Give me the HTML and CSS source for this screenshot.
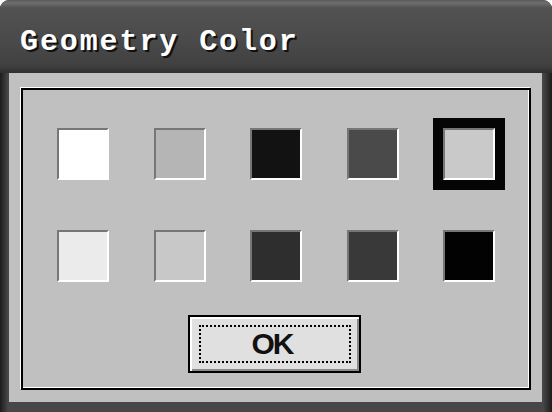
FILE: index.html
```html
<!DOCTYPE html>
<html lang="en">
<head>
  <meta charset="UTF-8">
  <title>Geometry Color</title>
  <link rel="stylesheet" href="styles.css">
</head>
<body>
  <div class="window">
    <div class="titlebar">Geometry Color</div>
    <div class="client">
      <div class="panel">
        <div class="swatches">
          <div class="swatch c1"></div>
          <div class="swatch c2"></div>
          <div class="swatch c3"></div>
          <div class="swatch c4"></div>
          <div class="swatch c5 selected"></div>
          <div class="swatch c6"></div>
          <div class="swatch c7"></div>
          <div class="swatch c8"></div>
          <div class="swatch c9"></div>
          <div class="swatch c10"></div>
        </div>
        <button class="ok"><span>OK</span></button>
      </div>
    </div>
  </div>
</body>
</html>
```

FILE: styles.css
```css
*{margin: 0; padding: 0; box-sizing: border-box;}
body{background: #fff; width: 552px; height: 412px; overflow: hidden;}
div.window{width: 552px; height: 412px; border-radius: 9px 9px 0 0; overflow: hidden; display: flex; flex-direction: column;
  background: linear-gradient(to right, #1c1c1c 0, #474747 8px, #474747 calc(100% - 9px), #1c1c1c 100%);}
div.titlebar{height: 73px; flex: none; padding: 28px 0 0 20px; color: #fff;
  font-family: "Liberation Mono", monospace; font-weight: bold; font-size: 30px; line-height: 29px; letter-spacing: 1.9px;
  text-shadow: 2px 2px 0 #111;
  background: linear-gradient(to bottom, #5a5a5a 0, #6e6e6e 3px, #525252 8px, #4a4a4a 40px, #404040 66px, #2e2e2e 73px);}
div.client{flex: 1; margin: 0 10px 10px 9px; background: #c0c0c0; padding: 15px 11px 12px 12px; display: flex;}
div.panel{flex: 1; border: 2px solid #000; box-shadow: -1px -1px 0 #fff, inset -1px -1px 0 #fff;
  display: flex; flex-direction: column; align-items: center; padding-top: 38px;}
div.swatches{display: grid; grid-template-columns: repeat(5, 52px); grid-auto-rows: 52px; column-gap: 44.5px; row-gap: 50px;}
div.swatch{border: 2px solid; border-color: #767676 #fff #fff #767676;}
div.swatch.selected{outline: 10px solid #050505;}
.c1{background: #fff;}
.c2{background: #b5b5b5;}
.c3{background: #121212;}
.c4{background: #4a4a4a;}
.c5{background: #c9c9c9;}
.c6{background: #ebebeb;}
.c7{background: #c8c8c8;}
.c8{background: #2e2e2e;}
.c9{background: #393939;}
.c10{background: #020202;}
button.ok{margin-top: 33px; margin-right: 3px; width: 173px; height: 58px; padding: 8px 8px 8px 9px; background: #e0e0e0;
  border: 2px solid #000; box-shadow: inset 2px 2px 0 #fff, inset -2px -2px 0 #8a8a8a; display: flex;}
button.ok span{flex: 1; border: 2px dotted #000; display: flex; align-items: center; justify-content: center;
  font-family: "Liberation Sans", Arial, sans-serif; font-weight: bold; font-size: 30px; letter-spacing: -2px; color: #111; padding-right: 6px;}
```
